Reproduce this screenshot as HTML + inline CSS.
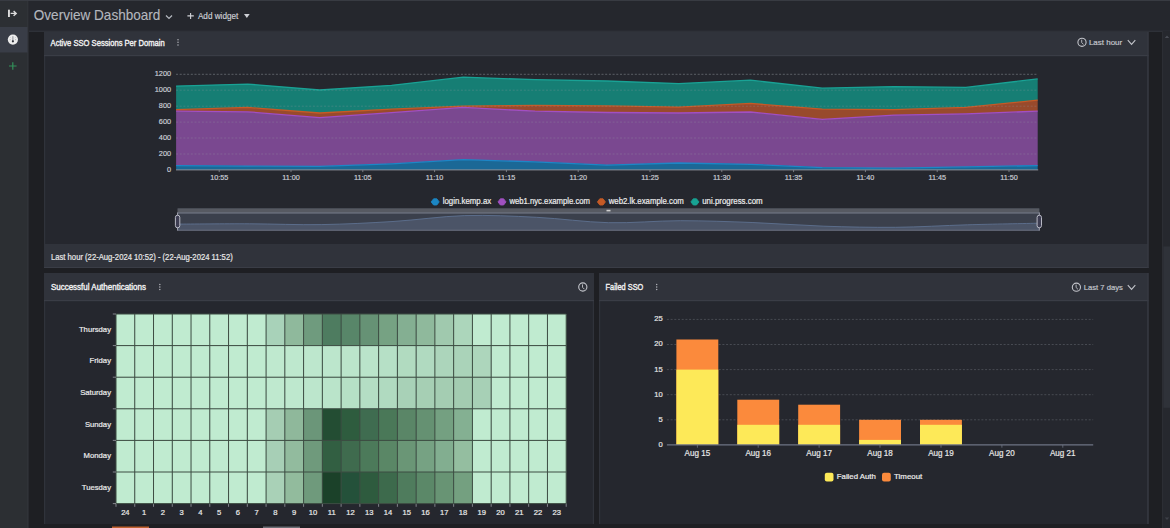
<!DOCTYPE html><html><head><meta charset="utf-8"><style>html,body{margin:0;padding:0;width:1170px;height:528px;overflow:hidden;background:#1e1f23;}svg{display:block}</style></head><body><svg width="1170" height="528" viewBox="0 0 1170 528" font-family="'Liberation Sans', sans-serif"><rect x="0" y="0" width="1170" height="528" fill="#1e1f23"/><rect x="0" y="0" width="28" height="528" fill="#2c2f33"/><rect x="27.5" y="0" width="1" height="528" fill="#35383f"/><rect x="0" y="27" width="27.5" height="25.5" fill="#393d47"/><rect x="29" y="0" width="1141" height="31" fill="#25272d"/><rect x="0" y="0" width="1170" height="1" fill="#383b42"/><rect x="29" y="30.6" width="1141" height="1.4" fill="#2e3138"/><rect x="44" y="32" width="1104.5" height="236" fill="#30333b"/><rect x="45.2" y="56" width="1102.1" height="188" fill="#25272e"/><rect x="44" y="55" width="1104.5" height="1.2" fill="#3a3d46"/><rect x="44" y="267" width="1104.5" height="1" fill="#3a3d46"/><rect x="1147.4" y="32" width="1.2" height="236" fill="#383b43"/><rect x="44" y="273" width="550" height="251" fill="#30333b"/><rect x="45.2" y="301" width="547.6" height="223" fill="#25272e"/><rect x="44" y="300" width="550" height="1.2" fill="#3a3d46"/><rect x="599" y="273" width="549.5" height="251" fill="#30333b"/><rect x="600.2" y="301" width="547.1" height="223" fill="#25272e"/><rect x="599" y="300" width="549.5" height="1.2" fill="#3a3d46"/><rect x="1147.4" y="273" width="1.2" height="251" fill="#383b43"/><rect x="1162" y="31" width="8" height="497" fill="#26282e"/><rect x="1162" y="31" width="1" height="497" fill="#2c2e34"/><rect x="1163.4" y="246.5" width="6.6" height="161.3" fill="#2f3239"/><path d="M1164.8,517.5 L1167,519.9 L1169.2,517.5 Z" fill="#3e4148"/><path d="M1164.8,38 L1167,35.6 L1169.2,38 Z" fill="#4a4d55"/><rect x="112" y="526.5" width="37" height="1.5" fill="#c0612f"/><rect x="263" y="526.5" width="37" height="1.5" fill="#6a6d74"/><polygon points="176.1,86.1 247.9,84.1 319.7,90.0 391.5,85.3 463.3,77.2 535.1,79.7 606.9,81.0 678.7,83.6 750.5,80.2 822.3,88.2 894.1,86.6 965.9,87.4 1037.7,78.9 1037.7,100.2 965.9,107.4 894.1,109.7 822.3,109.2 750.5,103.4 678.7,107.1 606.9,105.9 535.1,105.3 463.3,106.2 391.5,109.2 319.7,113.0 247.9,107.4 176.1,109.7" fill="#167e74"/><polygon points="176.1,109.7 247.9,107.4 319.7,113.0 391.5,109.2 463.3,106.2 535.1,105.3 606.9,105.9 678.7,107.1 750.5,103.4 822.3,109.2 894.1,109.7 965.9,107.4 1037.7,100.2 1037.7,111.2 965.9,113.8 894.1,115.1 822.3,119.4 750.5,112.0 678.7,113.0 606.9,112.5 535.1,111.2 463.3,107.4 391.5,112.6 319.7,117.6 247.9,111.8 176.1,111.2" fill="#984a2c"/><polygon points="176.1,111.2 247.9,111.8 319.7,117.6 391.5,112.6 463.3,107.4 535.1,111.2 606.9,112.5 678.7,113.0 750.5,112.0 822.3,119.4 894.1,115.1 965.9,113.8 1037.7,111.2 1037.7,165.6 965.9,166.9 894.1,168.2 822.3,167.6 750.5,164.3 678.7,163.0 606.9,165.1 535.1,161.8 463.3,159.7 391.5,163.8 319.7,166.4 247.9,166.1 176.1,165.6" fill="#7a4890"/><polygon points="176.1,165.6 247.9,166.1 319.7,166.4 391.5,163.8 463.3,159.7 535.1,161.8 606.9,165.1 678.7,163.0 750.5,164.3 822.3,167.6 894.1,168.2 965.9,166.9 1037.7,165.6 1037.7,169.9 965.9,169.9 894.1,169.9 822.3,169.9 750.5,169.9 678.7,169.9 606.9,169.9 535.1,169.9 463.3,169.9 391.5,169.9 319.7,169.9 247.9,169.9 176.1,169.9" fill="#1b6896"/><polyline points="176.1,86.1 247.9,84.1 319.7,90.0 391.5,85.3 463.3,77.2 535.1,79.7 606.9,81.0 678.7,83.6 750.5,80.2 822.3,88.2 894.1,86.6 965.9,87.4 1037.7,78.9" fill="none" stroke="#19a295" stroke-width="1.3"/><polyline points="176.1,109.7 247.9,107.4 319.7,113.0 391.5,109.2 463.3,106.2 535.1,105.3 606.9,105.9 678.7,107.1 750.5,103.4 822.3,109.2 894.1,109.7 965.9,107.4 1037.7,100.2" fill="none" stroke="#c65a26" stroke-width="1.3"/><polyline points="176.1,111.2 247.9,111.8 319.7,117.6 391.5,112.6 463.3,107.4 535.1,111.2 606.9,112.5 678.7,113.0 750.5,112.0 822.3,119.4 894.1,115.1 965.9,113.8 1037.7,111.2" fill="none" stroke="#a24fc2" stroke-width="1.3"/><polyline points="176.1,165.6 247.9,166.1 319.7,166.4 391.5,163.8 463.3,159.7 535.1,161.8 606.9,165.1 678.7,163.0 750.5,164.3 822.3,167.6 894.1,168.2 965.9,166.9 1037.7,165.6" fill="none" stroke="#1d86c6" stroke-width="1.3"/><text x="171.10" y="171.80" font-size="7.5" fill="#c9cbd3" font-weight="400" text-anchor="end" textLength="4.09" lengthAdjust="spacingAndGlyphs" stroke="#c9cbd3" stroke-width="0.2" >0</text><line x1="176" y1="154.0" x2="1038" y2="154.0" stroke="#9a9da6" stroke-opacity="0.28" stroke-width="1" stroke-dasharray="2,1.7"/><text x="171.10" y="155.87" font-size="7.5" fill="#c9cbd3" font-weight="400" text-anchor="end" textLength="12.26" lengthAdjust="spacingAndGlyphs" stroke="#c9cbd3" stroke-width="0.2" >200</text><line x1="176" y1="138.0" x2="1038" y2="138.0" stroke="#9a9da6" stroke-opacity="0.28" stroke-width="1" stroke-dasharray="2,1.7"/><text x="171.10" y="139.93" font-size="7.5" fill="#c9cbd3" font-weight="400" text-anchor="end" textLength="12.26" lengthAdjust="spacingAndGlyphs" stroke="#c9cbd3" stroke-width="0.2" >400</text><line x1="176" y1="122.1" x2="1038" y2="122.1" stroke="#9a9da6" stroke-opacity="0.28" stroke-width="1" stroke-dasharray="2,1.7"/><text x="171.10" y="124.00" font-size="7.5" fill="#c9cbd3" font-weight="400" text-anchor="end" textLength="12.26" lengthAdjust="spacingAndGlyphs" stroke="#c9cbd3" stroke-width="0.2" >600</text><line x1="176" y1="106.2" x2="1038" y2="106.2" stroke="#9a9da6" stroke-opacity="0.28" stroke-width="1" stroke-dasharray="2,1.7"/><text x="171.10" y="108.07" font-size="7.5" fill="#c9cbd3" font-weight="400" text-anchor="end" textLength="12.26" lengthAdjust="spacingAndGlyphs" stroke="#c9cbd3" stroke-width="0.2" >800</text><line x1="176" y1="90.2" x2="1038" y2="90.2" stroke="#9a9da6" stroke-opacity="0.28" stroke-width="1" stroke-dasharray="2,1.7"/><text x="171.10" y="92.13" font-size="7.5" fill="#c9cbd3" font-weight="400" text-anchor="end" textLength="16.35" lengthAdjust="spacingAndGlyphs" stroke="#c9cbd3" stroke-width="0.2" >1000</text><line x1="176" y1="74.3" x2="1038" y2="74.3" stroke="#9a9da6" stroke-opacity="0.28" stroke-width="1" stroke-dasharray="2,1.7"/><text x="171.10" y="76.20" font-size="7.5" fill="#c9cbd3" font-weight="400" text-anchor="end" textLength="16.35" lengthAdjust="spacingAndGlyphs" stroke="#c9cbd3" stroke-width="0.2" >1200</text><line x1="176" y1="74.3" x2="1038" y2="74.3" stroke="#6a6d76" stroke-opacity="0.5" stroke-width="1" stroke-dasharray="2,1.7"/><line x1="176" y1="169.9" x2="1038.2" y2="169.9" stroke="#8c8e96" stroke-width="1"/><line x1="219.2" y1="169.9" x2="219.2" y2="172.1" stroke="#8c8e96" stroke-width="0.8"/><text x="219.20" y="180.20" font-size="7.8" fill="#c9cbd3" font-weight="400" text-anchor="middle" textLength="18.15" lengthAdjust="spacingAndGlyphs" stroke="#c9cbd3" stroke-width="0.2" >10:55</text><line x1="291.0" y1="169.9" x2="291.0" y2="172.1" stroke="#8c8e96" stroke-width="0.8"/><text x="291.00" y="180.20" font-size="7.8" fill="#c9cbd3" font-weight="400" text-anchor="middle" textLength="17.61" lengthAdjust="spacingAndGlyphs" stroke="#c9cbd3" stroke-width="0.2" >11:00</text><line x1="362.8" y1="169.9" x2="362.8" y2="172.1" stroke="#8c8e96" stroke-width="0.8"/><text x="362.80" y="180.20" font-size="7.8" fill="#c9cbd3" font-weight="400" text-anchor="middle" textLength="17.61" lengthAdjust="spacingAndGlyphs" stroke="#c9cbd3" stroke-width="0.2" >11:05</text><line x1="434.6" y1="169.9" x2="434.6" y2="172.1" stroke="#8c8e96" stroke-width="0.8"/><text x="434.60" y="180.20" font-size="7.8" fill="#c9cbd3" font-weight="400" text-anchor="middle" textLength="17.61" lengthAdjust="spacingAndGlyphs" stroke="#c9cbd3" stroke-width="0.2" >11:10</text><line x1="506.4" y1="169.9" x2="506.4" y2="172.1" stroke="#8c8e96" stroke-width="0.8"/><text x="506.40" y="180.20" font-size="7.8" fill="#c9cbd3" font-weight="400" text-anchor="middle" textLength="17.61" lengthAdjust="spacingAndGlyphs" stroke="#c9cbd3" stroke-width="0.2" >11:15</text><line x1="578.2" y1="169.9" x2="578.2" y2="172.1" stroke="#8c8e96" stroke-width="0.8"/><text x="578.20" y="180.20" font-size="7.8" fill="#c9cbd3" font-weight="400" text-anchor="middle" textLength="17.61" lengthAdjust="spacingAndGlyphs" stroke="#c9cbd3" stroke-width="0.2" >11:20</text><line x1="650.0" y1="169.9" x2="650.0" y2="172.1" stroke="#8c8e96" stroke-width="0.8"/><text x="650.00" y="180.20" font-size="7.8" fill="#c9cbd3" font-weight="400" text-anchor="middle" textLength="17.61" lengthAdjust="spacingAndGlyphs" stroke="#c9cbd3" stroke-width="0.2" >11:25</text><line x1="721.8" y1="169.9" x2="721.8" y2="172.1" stroke="#8c8e96" stroke-width="0.8"/><text x="721.80" y="180.20" font-size="7.8" fill="#c9cbd3" font-weight="400" text-anchor="middle" textLength="17.61" lengthAdjust="spacingAndGlyphs" stroke="#c9cbd3" stroke-width="0.2" >11:30</text><line x1="793.6" y1="169.9" x2="793.6" y2="172.1" stroke="#8c8e96" stroke-width="0.8"/><text x="793.60" y="180.20" font-size="7.8" fill="#c9cbd3" font-weight="400" text-anchor="middle" textLength="17.61" lengthAdjust="spacingAndGlyphs" stroke="#c9cbd3" stroke-width="0.2" >11:35</text><line x1="865.4" y1="169.9" x2="865.4" y2="172.1" stroke="#8c8e96" stroke-width="0.8"/><text x="865.40" y="180.20" font-size="7.8" fill="#c9cbd3" font-weight="400" text-anchor="middle" textLength="17.61" lengthAdjust="spacingAndGlyphs" stroke="#c9cbd3" stroke-width="0.2" >11:40</text><line x1="937.2" y1="169.9" x2="937.2" y2="172.1" stroke="#8c8e96" stroke-width="0.8"/><text x="937.20" y="180.20" font-size="7.8" fill="#c9cbd3" font-weight="400" text-anchor="middle" textLength="17.61" lengthAdjust="spacingAndGlyphs" stroke="#c9cbd3" stroke-width="0.2" >11:45</text><line x1="1009.0" y1="169.9" x2="1009.0" y2="172.1" stroke="#8c8e96" stroke-width="0.8"/><text x="1009.00" y="180.20" font-size="7.8" fill="#c9cbd3" font-weight="400" text-anchor="middle" textLength="17.61" lengthAdjust="spacingAndGlyphs" stroke="#c9cbd3" stroke-width="0.2" >11:50</text><path d="M431.2,201.9 L433.59999999999997,198.8 L436.8,198.8 L439.2,201.9 L436.8,205.0 L433.59999999999997,205.0 Z" fill="#1b86c4" stroke="#1b86c4" stroke-width="0.9" stroke-linejoin="round"/><text x="442.70" y="203.70" font-size="8.3" fill="#ececec" font-weight="400" text-anchor="start" textLength="48.50" lengthAdjust="spacingAndGlyphs" stroke="#ececec" stroke-width="0.2" >login.kemp.ax</text><path d="M498.0,201.9 L500.4,198.8 L503.6,198.8 L506.0,201.9 L503.6,205.0 L500.4,205.0 Z" fill="#a050c0" stroke="#a050c0" stroke-width="0.9" stroke-linejoin="round"/><text x="509.40" y="203.70" font-size="8.3" fill="#ececec" font-weight="400" text-anchor="start" textLength="80.60" lengthAdjust="spacingAndGlyphs" stroke="#ececec" stroke-width="0.2" >web1.nyc.example.com</text><path d="M597.4,201.9 L599.8,198.8 L603.0,198.8 L605.4,201.9 L603.0,205.0 L599.8,205.0 Z" fill="#c45a26" stroke="#c45a26" stroke-width="0.9" stroke-linejoin="round"/><text x="608.70" y="203.70" font-size="8.3" fill="#ececec" font-weight="400" text-anchor="start" textLength="75.10" lengthAdjust="spacingAndGlyphs" stroke="#ececec" stroke-width="0.2" >web2.lk.example.com</text><path d="M690.9,201.9 L693.3,198.8 L696.5,198.8 L698.9,201.9 L696.5,205.0 L693.3,205.0 Z" fill="#17a393" stroke="#17a393" stroke-width="0.9" stroke-linejoin="round"/><text x="702.20" y="203.70" font-size="8.3" fill="#ececec" font-weight="400" text-anchor="start" textLength="60.40" lengthAdjust="spacingAndGlyphs" stroke="#ececec" stroke-width="0.2" >uni.progress.com</text><rect x="177.6" y="208.4" width="861.7" height="22.2" fill="#3b404c"/><rect x="177.6" y="208.4" width="861.7" height="4.1" fill="#575a62"/><rect x="177.6" y="212.4" width="861.7" height="1.1" fill="#7a7e8c"/><path d="M177.6,224.1 C189.6,224.1 225.5,223.7 249.4,223.8 C273.3,223.9 297.3,225.0 321.2,224.6 C345.2,224.2 369.1,223.0 393.0,221.5 C417.0,220.0 440.9,216.3 464.8,215.6 C488.8,214.9 512.7,216.1 536.6,217.3 C560.6,218.5 584.5,222.1 608.4,222.7 C632.4,223.3 656.3,220.7 680.3,220.7 C704.2,220.7 728.1,221.6 752.1,222.5 C776.0,223.4 799.9,225.4 823.9,226.2 C847.8,227.0 871.7,227.5 895.7,227.3 C919.6,227.1 943.6,225.5 967.5,224.8 C991.4,224.1 1027.3,223.5 1039.3,223.2 L1039.3,230.6 L177.6,230.6 Z" fill="#4b5467"/><path d="M177.6,224.1 C189.6,224.1 225.5,223.7 249.4,223.8 C273.3,223.9 297.3,225.0 321.2,224.6 C345.2,224.2 369.1,223.0 393.0,221.5 C417.0,220.0 440.9,216.3 464.8,215.6 C488.8,214.9 512.7,216.1 536.6,217.3 C560.6,218.5 584.5,222.1 608.4,222.7 C632.4,223.3 656.3,220.7 680.3,220.7 C704.2,220.7 728.1,221.6 752.1,222.5 C776.0,223.4 799.9,225.4 823.9,226.2 C847.8,227.0 871.7,227.5 895.7,227.3 C919.6,227.1 943.6,225.5 967.5,224.8 C991.4,224.1 1027.3,223.5 1039.3,223.2" fill="none" stroke="#5e7190" stroke-width="0.9"/><rect x="177.6" y="229.7" width="861.7" height="1" fill="#686d7c"/><line x1="177.6" y1="212.5" x2="177.6" y2="230.6" stroke="#b8b9c6" stroke-width="0.8"/><rect x="175.4" y="215.2" width="4.4" height="12.6" rx="2.2" fill="#3d3d52" stroke="#c6c7d2" stroke-width="0.9"/><line x1="1039.3" y1="212.5" x2="1039.3" y2="230.6" stroke="#b8b9c6" stroke-width="0.8"/><rect x="1037.1" y="215.2" width="4.4" height="12.6" rx="2.2" fill="#3d3d52" stroke="#c6c7d2" stroke-width="0.9"/><rect x="606.5" y="209.8" width="4" height="1.6" fill="#d0d0d0"/><rect x="116.00" y="314.00" width="18.81" height="31.65" fill="#c0ebd0"/><rect x="134.76" y="314.00" width="18.81" height="31.65" fill="#c0ebd0"/><rect x="153.52" y="314.00" width="18.81" height="31.65" fill="#c0ebd0"/><rect x="172.28" y="314.00" width="18.81" height="31.65" fill="#c0ebd0"/><rect x="191.03" y="314.00" width="18.81" height="31.65" fill="#c0ebd0"/><rect x="209.79" y="314.00" width="18.81" height="31.65" fill="#c0ebd0"/><rect x="228.55" y="314.00" width="18.81" height="31.65" fill="#c0ebd0"/><rect x="247.31" y="314.00" width="18.81" height="31.65" fill="#c0ebd0"/><rect x="266.07" y="314.00" width="18.81" height="31.65" fill="#a8d2b9"/><rect x="284.83" y="314.00" width="18.81" height="31.65" fill="#8fb99c"/><rect x="303.58" y="314.00" width="18.81" height="31.65" fill="#6f9b7e"/><rect x="322.34" y="314.00" width="18.81" height="31.65" fill="#4e7c60"/><rect x="341.10" y="314.00" width="18.81" height="31.65" fill="#588669"/><rect x="359.86" y="314.00" width="18.81" height="31.65" fill="#669275"/><rect x="378.62" y="314.00" width="18.81" height="31.65" fill="#76a283"/><rect x="397.38" y="314.00" width="18.81" height="31.65" fill="#84af92"/><rect x="416.13" y="314.00" width="18.81" height="31.65" fill="#8fb99c"/><rect x="434.89" y="314.00" width="18.81" height="31.65" fill="#a0c9ae"/><rect x="453.65" y="314.00" width="18.81" height="31.65" fill="#acd6bb"/><rect x="472.41" y="314.00" width="18.81" height="31.65" fill="#c0ebd0"/><rect x="491.17" y="314.00" width="18.81" height="31.65" fill="#c0ebd0"/><rect x="509.93" y="314.00" width="18.81" height="31.65" fill="#c0ebd0"/><rect x="528.68" y="314.00" width="18.81" height="31.65" fill="#c0ebd0"/><rect x="547.44" y="314.00" width="18.81" height="31.65" fill="#c0ebd0"/><rect x="116.00" y="345.60" width="18.81" height="31.65" fill="#c0ebd0"/><rect x="134.76" y="345.60" width="18.81" height="31.65" fill="#c0ebd0"/><rect x="153.52" y="345.60" width="18.81" height="31.65" fill="#c0ebd0"/><rect x="172.28" y="345.60" width="18.81" height="31.65" fill="#c0ebd0"/><rect x="191.03" y="345.60" width="18.81" height="31.65" fill="#c0ebd0"/><rect x="209.79" y="345.60" width="18.81" height="31.65" fill="#c0ebd0"/><rect x="228.55" y="345.60" width="18.81" height="31.65" fill="#c0ebd0"/><rect x="247.31" y="345.60" width="18.81" height="31.65" fill="#c0ebd0"/><rect x="266.07" y="345.60" width="18.81" height="31.65" fill="#bfe9cf"/><rect x="284.83" y="345.60" width="18.81" height="31.65" fill="#bee8ce"/><rect x="303.58" y="345.60" width="18.81" height="31.65" fill="#bde7cd"/><rect x="322.34" y="345.60" width="18.81" height="31.65" fill="#bce6cc"/><rect x="341.10" y="345.60" width="18.81" height="31.65" fill="#bbe5cb"/><rect x="359.86" y="345.60" width="18.81" height="31.65" fill="#bae4ca"/><rect x="378.62" y="345.60" width="18.81" height="31.65" fill="#b6e0c6"/><rect x="397.38" y="345.60" width="18.81" height="31.65" fill="#b1dbc0"/><rect x="416.13" y="345.60" width="18.81" height="31.65" fill="#b0dac0"/><rect x="434.89" y="345.60" width="18.81" height="31.65" fill="#acd5bb"/><rect x="453.65" y="345.60" width="18.81" height="31.65" fill="#aad3b9"/><rect x="472.41" y="345.60" width="18.81" height="31.65" fill="#add6bc"/><rect x="491.17" y="345.60" width="18.81" height="31.65" fill="#c0ebd0"/><rect x="509.93" y="345.60" width="18.81" height="31.65" fill="#c0ebd0"/><rect x="528.68" y="345.60" width="18.81" height="31.65" fill="#c0ebd0"/><rect x="547.44" y="345.60" width="18.81" height="31.65" fill="#c0ebd0"/><rect x="116.00" y="377.20" width="18.81" height="31.65" fill="#c0ebd0"/><rect x="134.76" y="377.20" width="18.81" height="31.65" fill="#c0ebd0"/><rect x="153.52" y="377.20" width="18.81" height="31.65" fill="#c0ebd0"/><rect x="172.28" y="377.20" width="18.81" height="31.65" fill="#c0ebd0"/><rect x="191.03" y="377.20" width="18.81" height="31.65" fill="#c0ebd0"/><rect x="209.79" y="377.20" width="18.81" height="31.65" fill="#c0ebd0"/><rect x="228.55" y="377.20" width="18.81" height="31.65" fill="#c0ebd0"/><rect x="247.31" y="377.20" width="18.81" height="31.65" fill="#c0ebd0"/><rect x="266.07" y="377.20" width="18.81" height="31.65" fill="#bfe9cf"/><rect x="284.83" y="377.20" width="18.81" height="31.65" fill="#bee8ce"/><rect x="303.58" y="377.20" width="18.81" height="31.65" fill="#bce6cc"/><rect x="322.34" y="377.20" width="18.81" height="31.65" fill="#bae4ca"/><rect x="341.10" y="377.20" width="18.81" height="31.65" fill="#b6e0c6"/><rect x="359.86" y="377.20" width="18.81" height="31.65" fill="#b4dec4"/><rect x="378.62" y="377.20" width="18.81" height="31.65" fill="#b0dac0"/><rect x="397.38" y="377.20" width="18.81" height="31.65" fill="#a8d1b7"/><rect x="416.13" y="377.20" width="18.81" height="31.65" fill="#a6cfb4"/><rect x="434.89" y="377.20" width="18.81" height="31.65" fill="#a4cdb2"/><rect x="453.65" y="377.20" width="18.81" height="31.65" fill="#a3ccb1"/><rect x="472.41" y="377.20" width="18.81" height="31.65" fill="#a7d0b6"/><rect x="491.17" y="377.20" width="18.81" height="31.65" fill="#c0ebd0"/><rect x="509.93" y="377.20" width="18.81" height="31.65" fill="#c0ebd0"/><rect x="528.68" y="377.20" width="18.81" height="31.65" fill="#c0ebd0"/><rect x="547.44" y="377.20" width="18.81" height="31.65" fill="#c0ebd0"/><rect x="116.00" y="408.80" width="18.81" height="31.65" fill="#c0ebd0"/><rect x="134.76" y="408.80" width="18.81" height="31.65" fill="#c0ebd0"/><rect x="153.52" y="408.80" width="18.81" height="31.65" fill="#c0ebd0"/><rect x="172.28" y="408.80" width="18.81" height="31.65" fill="#c0ebd0"/><rect x="191.03" y="408.80" width="18.81" height="31.65" fill="#c0ebd0"/><rect x="209.79" y="408.80" width="18.81" height="31.65" fill="#c0ebd0"/><rect x="228.55" y="408.80" width="18.81" height="31.65" fill="#c0ebd0"/><rect x="247.31" y="408.80" width="18.81" height="31.65" fill="#c0ebd0"/><rect x="266.07" y="408.80" width="18.81" height="31.65" fill="#a5cdb3"/><rect x="284.83" y="408.80" width="18.81" height="31.65" fill="#8fb89b"/><rect x="303.58" y="408.80" width="18.81" height="31.65" fill="#6b9679"/><rect x="322.34" y="408.80" width="18.81" height="31.65" fill="#234d33"/><rect x="341.10" y="408.80" width="18.81" height="31.65" fill="#2e5c3e"/><rect x="359.86" y="408.80" width="18.81" height="31.65" fill="#3f6c50"/><rect x="378.62" y="408.80" width="18.81" height="31.65" fill="#4a7858"/><rect x="397.38" y="408.80" width="18.81" height="31.65" fill="#5a8667"/><rect x="416.13" y="408.80" width="18.81" height="31.65" fill="#659172"/><rect x="434.89" y="408.80" width="18.81" height="31.65" fill="#74a081"/><rect x="453.65" y="408.80" width="18.81" height="31.65" fill="#84b092"/><rect x="472.41" y="408.80" width="18.81" height="31.65" fill="#c0ebd0"/><rect x="491.17" y="408.80" width="18.81" height="31.65" fill="#c0ebd0"/><rect x="509.93" y="408.80" width="18.81" height="31.65" fill="#c0ebd0"/><rect x="528.68" y="408.80" width="18.81" height="31.65" fill="#c0ebd0"/><rect x="547.44" y="408.80" width="18.81" height="31.65" fill="#c0ebd0"/><rect x="116.00" y="440.40" width="18.81" height="31.65" fill="#c0ebd0"/><rect x="134.76" y="440.40" width="18.81" height="31.65" fill="#c0ebd0"/><rect x="153.52" y="440.40" width="18.81" height="31.65" fill="#c0ebd0"/><rect x="172.28" y="440.40" width="18.81" height="31.65" fill="#c0ebd0"/><rect x="191.03" y="440.40" width="18.81" height="31.65" fill="#c0ebd0"/><rect x="209.79" y="440.40" width="18.81" height="31.65" fill="#c0ebd0"/><rect x="228.55" y="440.40" width="18.81" height="31.65" fill="#c0ebd0"/><rect x="247.31" y="440.40" width="18.81" height="31.65" fill="#c0ebd0"/><rect x="266.07" y="440.40" width="18.81" height="31.65" fill="#a7cfb6"/><rect x="284.83" y="440.40" width="18.81" height="31.65" fill="#92bb9e"/><rect x="303.58" y="440.40" width="18.81" height="31.65" fill="#6f9a7c"/><rect x="322.34" y="440.40" width="18.81" height="31.65" fill="#325f42"/><rect x="341.10" y="440.40" width="18.81" height="31.65" fill="#3f6b4e"/><rect x="359.86" y="440.40" width="18.81" height="31.65" fill="#4c7a5a"/><rect x="378.62" y="440.40" width="18.81" height="31.65" fill="#5a8766"/><rect x="397.38" y="440.40" width="18.81" height="31.65" fill="#6a9676"/><rect x="416.13" y="440.40" width="18.81" height="31.65" fill="#76a283"/><rect x="434.89" y="440.40" width="18.81" height="31.65" fill="#82ae90"/><rect x="453.65" y="440.40" width="18.81" height="31.65" fill="#94bea0"/><rect x="472.41" y="440.40" width="18.81" height="31.65" fill="#c0ebd0"/><rect x="491.17" y="440.40" width="18.81" height="31.65" fill="#c0ebd0"/><rect x="509.93" y="440.40" width="18.81" height="31.65" fill="#c0ebd0"/><rect x="528.68" y="440.40" width="18.81" height="31.65" fill="#c0ebd0"/><rect x="547.44" y="440.40" width="18.81" height="31.65" fill="#c0ebd0"/><rect x="116.00" y="472.00" width="18.81" height="31.65" fill="#c0ebd0"/><rect x="134.76" y="472.00" width="18.81" height="31.65" fill="#c0ebd0"/><rect x="153.52" y="472.00" width="18.81" height="31.65" fill="#c0ebd0"/><rect x="172.28" y="472.00" width="18.81" height="31.65" fill="#c0ebd0"/><rect x="191.03" y="472.00" width="18.81" height="31.65" fill="#c0ebd0"/><rect x="209.79" y="472.00" width="18.81" height="31.65" fill="#c0ebd0"/><rect x="228.55" y="472.00" width="18.81" height="31.65" fill="#c0ebd0"/><rect x="247.31" y="472.00" width="18.81" height="31.65" fill="#c0ebd0"/><rect x="266.07" y="472.00" width="18.81" height="31.65" fill="#a9d1b7"/><rect x="284.83" y="472.00" width="18.81" height="31.65" fill="#92bb9d"/><rect x="303.58" y="472.00" width="18.81" height="31.65" fill="#6f9a7c"/><rect x="322.34" y="472.00" width="18.81" height="31.65" fill="#1b4129"/><rect x="341.10" y="472.00" width="18.81" height="31.65" fill="#24513a"/><rect x="359.86" y="472.00" width="18.81" height="31.65" fill="#2e5b3e"/><rect x="378.62" y="472.00" width="18.81" height="31.65" fill="#3d6a4c"/><rect x="397.38" y="472.00" width="18.81" height="31.65" fill="#4f7c5d"/><rect x="416.13" y="472.00" width="18.81" height="31.65" fill="#5b8868"/><rect x="434.89" y="472.00" width="18.81" height="31.65" fill="#689474"/><rect x="453.65" y="472.00" width="18.81" height="31.65" fill="#74a080"/><rect x="472.41" y="472.00" width="18.81" height="31.65" fill="#c0ebd0"/><rect x="491.17" y="472.00" width="18.81" height="31.65" fill="#c0ebd0"/><rect x="509.93" y="472.00" width="18.81" height="31.65" fill="#c0ebd0"/><rect x="528.68" y="472.00" width="18.81" height="31.65" fill="#c0ebd0"/><rect x="547.44" y="472.00" width="18.81" height="31.65" fill="#c0ebd0"/><line x1="116.00" y1="314.0" x2="116.00" y2="503.60" stroke="#3d4d43" stroke-width="1"/><line x1="116.00" y1="503.60" x2="116.00" y2="506.80" stroke="#9a9ca3" stroke-width="0.8"/><line x1="134.76" y1="314.0" x2="134.76" y2="503.60" stroke="#3d4d43" stroke-width="1"/><line x1="134.76" y1="503.60" x2="134.76" y2="506.80" stroke="#9a9ca3" stroke-width="0.8"/><line x1="153.52" y1="314.0" x2="153.52" y2="503.60" stroke="#3d4d43" stroke-width="1"/><line x1="153.52" y1="503.60" x2="153.52" y2="506.80" stroke="#9a9ca3" stroke-width="0.8"/><line x1="172.28" y1="314.0" x2="172.28" y2="503.60" stroke="#3d4d43" stroke-width="1"/><line x1="172.28" y1="503.60" x2="172.28" y2="506.80" stroke="#9a9ca3" stroke-width="0.8"/><line x1="191.03" y1="314.0" x2="191.03" y2="503.60" stroke="#3d4d43" stroke-width="1"/><line x1="191.03" y1="503.60" x2="191.03" y2="506.80" stroke="#9a9ca3" stroke-width="0.8"/><line x1="209.79" y1="314.0" x2="209.79" y2="503.60" stroke="#3d4d43" stroke-width="1"/><line x1="209.79" y1="503.60" x2="209.79" y2="506.80" stroke="#9a9ca3" stroke-width="0.8"/><line x1="228.55" y1="314.0" x2="228.55" y2="503.60" stroke="#3d4d43" stroke-width="1"/><line x1="228.55" y1="503.60" x2="228.55" y2="506.80" stroke="#9a9ca3" stroke-width="0.8"/><line x1="247.31" y1="314.0" x2="247.31" y2="503.60" stroke="#3d4d43" stroke-width="1"/><line x1="247.31" y1="503.60" x2="247.31" y2="506.80" stroke="#9a9ca3" stroke-width="0.8"/><line x1="266.07" y1="314.0" x2="266.07" y2="503.60" stroke="#3d4d43" stroke-width="1"/><line x1="266.07" y1="503.60" x2="266.07" y2="506.80" stroke="#9a9ca3" stroke-width="0.8"/><line x1="284.83" y1="314.0" x2="284.83" y2="503.60" stroke="#3d4d43" stroke-width="1"/><line x1="284.83" y1="503.60" x2="284.83" y2="506.80" stroke="#9a9ca3" stroke-width="0.8"/><line x1="303.58" y1="314.0" x2="303.58" y2="503.60" stroke="#3d4d43" stroke-width="1"/><line x1="303.58" y1="503.60" x2="303.58" y2="506.80" stroke="#9a9ca3" stroke-width="0.8"/><line x1="322.34" y1="314.0" x2="322.34" y2="503.60" stroke="#3d4d43" stroke-width="1"/><line x1="322.34" y1="503.60" x2="322.34" y2="506.80" stroke="#9a9ca3" stroke-width="0.8"/><line x1="341.10" y1="314.0" x2="341.10" y2="503.60" stroke="#3d4d43" stroke-width="1"/><line x1="341.10" y1="503.60" x2="341.10" y2="506.80" stroke="#9a9ca3" stroke-width="0.8"/><line x1="359.86" y1="314.0" x2="359.86" y2="503.60" stroke="#3d4d43" stroke-width="1"/><line x1="359.86" y1="503.60" x2="359.86" y2="506.80" stroke="#9a9ca3" stroke-width="0.8"/><line x1="378.62" y1="314.0" x2="378.62" y2="503.60" stroke="#3d4d43" stroke-width="1"/><line x1="378.62" y1="503.60" x2="378.62" y2="506.80" stroke="#9a9ca3" stroke-width="0.8"/><line x1="397.38" y1="314.0" x2="397.38" y2="503.60" stroke="#3d4d43" stroke-width="1"/><line x1="397.38" y1="503.60" x2="397.38" y2="506.80" stroke="#9a9ca3" stroke-width="0.8"/><line x1="416.13" y1="314.0" x2="416.13" y2="503.60" stroke="#3d4d43" stroke-width="1"/><line x1="416.13" y1="503.60" x2="416.13" y2="506.80" stroke="#9a9ca3" stroke-width="0.8"/><line x1="434.89" y1="314.0" x2="434.89" y2="503.60" stroke="#3d4d43" stroke-width="1"/><line x1="434.89" y1="503.60" x2="434.89" y2="506.80" stroke="#9a9ca3" stroke-width="0.8"/><line x1="453.65" y1="314.0" x2="453.65" y2="503.60" stroke="#3d4d43" stroke-width="1"/><line x1="453.65" y1="503.60" x2="453.65" y2="506.80" stroke="#9a9ca3" stroke-width="0.8"/><line x1="472.41" y1="314.0" x2="472.41" y2="503.60" stroke="#3d4d43" stroke-width="1"/><line x1="472.41" y1="503.60" x2="472.41" y2="506.80" stroke="#9a9ca3" stroke-width="0.8"/><line x1="491.17" y1="314.0" x2="491.17" y2="503.60" stroke="#3d4d43" stroke-width="1"/><line x1="491.17" y1="503.60" x2="491.17" y2="506.80" stroke="#9a9ca3" stroke-width="0.8"/><line x1="509.93" y1="314.0" x2="509.93" y2="503.60" stroke="#3d4d43" stroke-width="1"/><line x1="509.93" y1="503.60" x2="509.93" y2="506.80" stroke="#9a9ca3" stroke-width="0.8"/><line x1="528.68" y1="314.0" x2="528.68" y2="503.60" stroke="#3d4d43" stroke-width="1"/><line x1="528.68" y1="503.60" x2="528.68" y2="506.80" stroke="#9a9ca3" stroke-width="0.8"/><line x1="547.44" y1="314.0" x2="547.44" y2="503.60" stroke="#3d4d43" stroke-width="1"/><line x1="547.44" y1="503.60" x2="547.44" y2="506.80" stroke="#9a9ca3" stroke-width="0.8"/><line x1="566.20" y1="314.0" x2="566.20" y2="503.60" stroke="#3d4d43" stroke-width="1"/><line x1="566.20" y1="503.60" x2="566.20" y2="506.80" stroke="#9a9ca3" stroke-width="0.8"/><line x1="116.0" y1="314.00" x2="566.20" y2="314.00" stroke="#3d4d43" stroke-width="1"/><line x1="112.8" y1="314.00" x2="116.0" y2="314.00" stroke="#9a9ca3" stroke-width="0.8"/><line x1="116.0" y1="345.60" x2="566.20" y2="345.60" stroke="#3d4d43" stroke-width="1"/><line x1="112.8" y1="345.60" x2="116.0" y2="345.60" stroke="#9a9ca3" stroke-width="0.8"/><line x1="116.0" y1="377.20" x2="566.20" y2="377.20" stroke="#3d4d43" stroke-width="1"/><line x1="112.8" y1="377.20" x2="116.0" y2="377.20" stroke="#9a9ca3" stroke-width="0.8"/><line x1="116.0" y1="408.80" x2="566.20" y2="408.80" stroke="#3d4d43" stroke-width="1"/><line x1="112.8" y1="408.80" x2="116.0" y2="408.80" stroke="#9a9ca3" stroke-width="0.8"/><line x1="116.0" y1="440.40" x2="566.20" y2="440.40" stroke="#3d4d43" stroke-width="1"/><line x1="112.8" y1="440.40" x2="116.0" y2="440.40" stroke="#9a9ca3" stroke-width="0.8"/><line x1="116.0" y1="472.00" x2="566.20" y2="472.00" stroke="#3d4d43" stroke-width="1"/><line x1="112.8" y1="472.00" x2="116.0" y2="472.00" stroke="#9a9ca3" stroke-width="0.8"/><line x1="116.0" y1="503.60" x2="566.20" y2="503.60" stroke="#3d4d43" stroke-width="1"/><line x1="112.8" y1="503.60" x2="116.0" y2="503.60" stroke="#9a9ca3" stroke-width="0.8"/><text x="111.00" y="331.80" font-size="8.1" fill="#ececec" font-weight="400" text-anchor="end" textLength="32.08" lengthAdjust="spacingAndGlyphs" stroke="#ececec" stroke-width="0.2" >Thursday</text><text x="111.00" y="363.40" font-size="8.1" fill="#ececec" font-weight="400" text-anchor="end" textLength="21.38" lengthAdjust="spacingAndGlyphs" stroke="#ececec" stroke-width="0.2" >Friday</text><text x="111.00" y="395.00" font-size="8.1" fill="#ececec" font-weight="400" text-anchor="end" textLength="30.80" lengthAdjust="spacingAndGlyphs" stroke="#ececec" stroke-width="0.2" >Saturday</text><text x="111.00" y="426.60" font-size="8.1" fill="#ececec" font-weight="400" text-anchor="end" textLength="26.10" lengthAdjust="spacingAndGlyphs" stroke="#ececec" stroke-width="0.2" >Sunday</text><text x="111.00" y="458.20" font-size="8.1" fill="#ececec" font-weight="400" text-anchor="end" textLength="27.38" lengthAdjust="spacingAndGlyphs" stroke="#ececec" stroke-width="0.2" >Monday</text><text x="111.00" y="489.80" font-size="8.1" fill="#ececec" font-weight="400" text-anchor="end" textLength="29.23" lengthAdjust="spacingAndGlyphs" stroke="#ececec" stroke-width="0.2" >Tuesday</text><text x="125.38" y="514.80" font-size="8.0" fill="#ececec" font-weight="400" text-anchor="middle" textLength="8.45" lengthAdjust="spacingAndGlyphs" stroke="#ececec" stroke-width="0.2" >24</text><text x="144.14" y="514.80" font-size="8.0" fill="#ececec" font-weight="400" text-anchor="middle" textLength="4.23" lengthAdjust="spacingAndGlyphs" stroke="#ececec" stroke-width="0.2" >1</text><text x="162.90" y="514.80" font-size="8.0" fill="#ececec" font-weight="400" text-anchor="middle" textLength="4.23" lengthAdjust="spacingAndGlyphs" stroke="#ececec" stroke-width="0.2" >2</text><text x="181.65" y="514.80" font-size="8.0" fill="#ececec" font-weight="400" text-anchor="middle" textLength="4.23" lengthAdjust="spacingAndGlyphs" stroke="#ececec" stroke-width="0.2" >3</text><text x="200.41" y="514.80" font-size="8.0" fill="#ececec" font-weight="400" text-anchor="middle" textLength="4.23" lengthAdjust="spacingAndGlyphs" stroke="#ececec" stroke-width="0.2" >4</text><text x="219.17" y="514.80" font-size="8.0" fill="#ececec" font-weight="400" text-anchor="middle" textLength="4.23" lengthAdjust="spacingAndGlyphs" stroke="#ececec" stroke-width="0.2" >5</text><text x="237.93" y="514.80" font-size="8.0" fill="#ececec" font-weight="400" text-anchor="middle" textLength="4.23" lengthAdjust="spacingAndGlyphs" stroke="#ececec" stroke-width="0.2" >6</text><text x="256.69" y="514.80" font-size="8.0" fill="#ececec" font-weight="400" text-anchor="middle" textLength="4.23" lengthAdjust="spacingAndGlyphs" stroke="#ececec" stroke-width="0.2" >7</text><text x="275.45" y="514.80" font-size="8.0" fill="#ececec" font-weight="400" text-anchor="middle" textLength="4.23" lengthAdjust="spacingAndGlyphs" stroke="#ececec" stroke-width="0.2" >8</text><text x="294.20" y="514.80" font-size="8.0" fill="#ececec" font-weight="400" text-anchor="middle" textLength="4.23" lengthAdjust="spacingAndGlyphs" stroke="#ececec" stroke-width="0.2" >9</text><text x="312.96" y="514.80" font-size="8.0" fill="#ececec" font-weight="400" text-anchor="middle" textLength="8.45" lengthAdjust="spacingAndGlyphs" stroke="#ececec" stroke-width="0.2" >10</text><text x="331.72" y="514.80" font-size="8.0" fill="#ececec" font-weight="400" text-anchor="middle" textLength="7.89" lengthAdjust="spacingAndGlyphs" stroke="#ececec" stroke-width="0.2" >11</text><text x="350.48" y="514.80" font-size="8.0" fill="#ececec" font-weight="400" text-anchor="middle" textLength="8.45" lengthAdjust="spacingAndGlyphs" stroke="#ececec" stroke-width="0.2" >12</text><text x="369.24" y="514.80" font-size="8.0" fill="#ececec" font-weight="400" text-anchor="middle" textLength="8.45" lengthAdjust="spacingAndGlyphs" stroke="#ececec" stroke-width="0.2" >13</text><text x="388.00" y="514.80" font-size="8.0" fill="#ececec" font-weight="400" text-anchor="middle" textLength="8.45" lengthAdjust="spacingAndGlyphs" stroke="#ececec" stroke-width="0.2" >14</text><text x="406.75" y="514.80" font-size="8.0" fill="#ececec" font-weight="400" text-anchor="middle" textLength="8.45" lengthAdjust="spacingAndGlyphs" stroke="#ececec" stroke-width="0.2" >15</text><text x="425.51" y="514.80" font-size="8.0" fill="#ececec" font-weight="400" text-anchor="middle" textLength="8.45" lengthAdjust="spacingAndGlyphs" stroke="#ececec" stroke-width="0.2" >16</text><text x="444.27" y="514.80" font-size="8.0" fill="#ececec" font-weight="400" text-anchor="middle" textLength="8.45" lengthAdjust="spacingAndGlyphs" stroke="#ececec" stroke-width="0.2" >17</text><text x="463.03" y="514.80" font-size="8.0" fill="#ececec" font-weight="400" text-anchor="middle" textLength="8.45" lengthAdjust="spacingAndGlyphs" stroke="#ececec" stroke-width="0.2" >18</text><text x="481.79" y="514.80" font-size="8.0" fill="#ececec" font-weight="400" text-anchor="middle" textLength="8.45" lengthAdjust="spacingAndGlyphs" stroke="#ececec" stroke-width="0.2" >19</text><text x="500.55" y="514.80" font-size="8.0" fill="#ececec" font-weight="400" text-anchor="middle" textLength="8.45" lengthAdjust="spacingAndGlyphs" stroke="#ececec" stroke-width="0.2" >20</text><text x="519.30" y="514.80" font-size="8.0" fill="#ececec" font-weight="400" text-anchor="middle" textLength="8.45" lengthAdjust="spacingAndGlyphs" stroke="#ececec" stroke-width="0.2" >21</text><text x="538.06" y="514.80" font-size="8.0" fill="#ececec" font-weight="400" text-anchor="middle" textLength="8.45" lengthAdjust="spacingAndGlyphs" stroke="#ececec" stroke-width="0.2" >22</text><text x="556.82" y="514.80" font-size="8.0" fill="#ececec" font-weight="400" text-anchor="middle" textLength="8.45" lengthAdjust="spacingAndGlyphs" stroke="#ececec" stroke-width="0.2" >23</text><text x="662.70" y="446.80" font-size="8.0" fill="#e6e6e6" font-weight="400" text-anchor="end" textLength="4.23" lengthAdjust="spacingAndGlyphs" stroke="#e6e6e6" stroke-width="0.2" >0</text><line x1="666.9" y1="419.8" x2="1093.2" y2="419.8" stroke="#6a6d76" stroke-opacity="0.5" stroke-width="1" stroke-dasharray="2,1.7"/><text x="662.70" y="421.70" font-size="8.0" fill="#e6e6e6" font-weight="400" text-anchor="end" textLength="4.23" lengthAdjust="spacingAndGlyphs" stroke="#e6e6e6" stroke-width="0.2" >5</text><line x1="666.9" y1="394.7" x2="1093.2" y2="394.7" stroke="#6a6d76" stroke-opacity="0.5" stroke-width="1" stroke-dasharray="2,1.7"/><text x="662.70" y="396.60" font-size="8.0" fill="#e6e6e6" font-weight="400" text-anchor="end" textLength="8.45" lengthAdjust="spacingAndGlyphs" stroke="#e6e6e6" stroke-width="0.2" >10</text><line x1="666.9" y1="369.6" x2="1093.2" y2="369.6" stroke="#6a6d76" stroke-opacity="0.5" stroke-width="1" stroke-dasharray="2,1.7"/><text x="662.70" y="371.50" font-size="8.0" fill="#e6e6e6" font-weight="400" text-anchor="end" textLength="8.45" lengthAdjust="spacingAndGlyphs" stroke="#e6e6e6" stroke-width="0.2" >15</text><line x1="666.9" y1="344.5" x2="1093.2" y2="344.5" stroke="#6a6d76" stroke-opacity="0.5" stroke-width="1" stroke-dasharray="2,1.7"/><text x="662.70" y="346.40" font-size="8.0" fill="#e6e6e6" font-weight="400" text-anchor="end" textLength="8.45" lengthAdjust="spacingAndGlyphs" stroke="#e6e6e6" stroke-width="0.2" >20</text><line x1="666.9" y1="319.4" x2="1093.2" y2="319.4" stroke="#6a6d76" stroke-opacity="0.5" stroke-width="1" stroke-dasharray="2,1.7"/><text x="662.70" y="321.30" font-size="8.0" fill="#e6e6e6" font-weight="400" text-anchor="end" textLength="8.45" lengthAdjust="spacingAndGlyphs" stroke="#e6e6e6" stroke-width="0.2" >25</text><rect x="676.4" y="339.5" width="41.9" height="105.4" fill="#fb8a3c"/><rect x="676.4" y="369.6" width="41.9" height="75.3" fill="#fde958"/><rect x="737.3" y="399.7" width="41.9" height="45.2" fill="#fb8a3c"/><rect x="737.3" y="424.8" width="41.9" height="20.1" fill="#fde958"/><rect x="798.2" y="404.7" width="41.9" height="40.2" fill="#fb8a3c"/><rect x="798.2" y="424.8" width="41.9" height="20.1" fill="#fde958"/><rect x="859.1" y="419.8" width="41.9" height="25.1" fill="#fb8a3c"/><rect x="859.1" y="439.9" width="41.9" height="5.0" fill="#fde958"/><rect x="920.0" y="419.8" width="41.9" height="25.1" fill="#fb8a3c"/><rect x="920.0" y="424.8" width="41.9" height="20.1" fill="#fde958"/><line x1="666.9" y1="444.9" x2="1093.2" y2="444.9" stroke="#6e7584" stroke-width="1.2"/><line x1="697.4" y1="444.9" x2="697.4" y2="447.7" stroke="#6e7584" stroke-width="0.8"/><text x="697.35" y="455.90" font-size="8.4" fill="#e6e6e6" font-weight="400" text-anchor="middle" textLength="25.56" lengthAdjust="spacingAndGlyphs" stroke="#e6e6e6" stroke-width="0.2" >Aug 15</text><line x1="758.2" y1="444.9" x2="758.2" y2="447.7" stroke="#6e7584" stroke-width="0.8"/><text x="758.25" y="455.90" font-size="8.4" fill="#e6e6e6" font-weight="400" text-anchor="middle" textLength="25.56" lengthAdjust="spacingAndGlyphs" stroke="#e6e6e6" stroke-width="0.2" >Aug 16</text><line x1="819.1" y1="444.9" x2="819.1" y2="447.7" stroke="#6e7584" stroke-width="0.8"/><text x="819.15" y="455.90" font-size="8.4" fill="#e6e6e6" font-weight="400" text-anchor="middle" textLength="25.56" lengthAdjust="spacingAndGlyphs" stroke="#e6e6e6" stroke-width="0.2" >Aug 17</text><line x1="880.0" y1="444.9" x2="880.0" y2="447.7" stroke="#6e7584" stroke-width="0.8"/><text x="880.05" y="455.90" font-size="8.4" fill="#e6e6e6" font-weight="400" text-anchor="middle" textLength="25.56" lengthAdjust="spacingAndGlyphs" stroke="#e6e6e6" stroke-width="0.2" >Aug 18</text><line x1="941.0" y1="444.9" x2="941.0" y2="447.7" stroke="#6e7584" stroke-width="0.8"/><text x="940.95" y="455.90" font-size="8.4" fill="#e6e6e6" font-weight="400" text-anchor="middle" textLength="25.56" lengthAdjust="spacingAndGlyphs" stroke="#e6e6e6" stroke-width="0.2" >Aug 19</text><line x1="1001.9" y1="444.9" x2="1001.9" y2="447.7" stroke="#6e7584" stroke-width="0.8"/><text x="1001.85" y="455.90" font-size="8.4" fill="#e6e6e6" font-weight="400" text-anchor="middle" textLength="25.56" lengthAdjust="spacingAndGlyphs" stroke="#e6e6e6" stroke-width="0.2" >Aug 20</text><line x1="1062.8" y1="444.9" x2="1062.8" y2="447.7" stroke="#6e7584" stroke-width="0.8"/><text x="1062.75" y="455.90" font-size="8.4" fill="#e6e6e6" font-weight="400" text-anchor="middle" textLength="25.56" lengthAdjust="spacingAndGlyphs" stroke="#e6e6e6" stroke-width="0.2" >Aug 21</text><rect x="824.8" y="472.7" width="8.7" height="8.7" rx="2" fill="#fde958"/><text x="836.80" y="479.10" font-size="7.8" fill="#ececec" font-weight="400" text-anchor="start" textLength="39.00" lengthAdjust="spacingAndGlyphs" stroke="#ececec" stroke-width="0.2" >Failed Auth</text><rect x="882" y="472.7" width="8.8" height="8.7" rx="2" fill="#fb8a3c"/><text x="894.10" y="479.10" font-size="7.8" fill="#ececec" font-weight="400" text-anchor="start" textLength="28.20" lengthAdjust="spacingAndGlyphs" stroke="#ececec" stroke-width="0.2" >Timeout</text><text x="33.80" y="20.46" font-size="14.5" fill="#b4b7be" font-weight="400" text-anchor="start" textLength="126.60" lengthAdjust="spacingAndGlyphs" stroke="#b4b7be" stroke-width="0.12" >Overview Dashboard</text><path d="M166,15.6 L169,18.4 L172,15.6" fill="none" stroke="#b4b7be" stroke-width="1.3"/><path d="M190.6,12.9 V18.9 M187.4,15.9 H193.8" stroke="#cfd1d6" stroke-width="1.1"/><text x="197.90" y="18.90" font-size="8.4" fill="#cfd1d6" font-weight="400" text-anchor="start" textLength="40.40" lengthAdjust="spacingAndGlyphs" stroke="#cfd1d6" stroke-width="0.15" >Add widget</text><path d="M244,14 L249.7,14 L246.85,18 Z" fill="#cfd1d6"/><text x="50.60" y="45.50" font-size="9.0" fill="#f2f2f2" font-weight="400" text-anchor="start" textLength="114.10" lengthAdjust="spacingAndGlyphs" stroke="#f2f2f2" stroke-width="0.38" >Active SSO Sessions Per Domain</text><circle cx="178" cy="39.70" r="0.75" fill="#b0b2b8"/><circle cx="178" cy="42.30" r="0.75" fill="#b0b2b8"/><circle cx="178" cy="44.90" r="0.75" fill="#b0b2b8"/><circle cx="1082" cy="42.3" r="4.1" fill="none" stroke="#c2c4ca" stroke-width="1.1"/><path d="M1081.7,39.699999999999996 V42.599999999999994 L1083.6,44.5" fill="none" stroke="#c2c4ca" stroke-width="0.9"/><text x="1088.90" y="45.00" font-size="8.0" fill="#c2c4ca" font-weight="400" text-anchor="start" textLength="33.30" lengthAdjust="spacingAndGlyphs" stroke="#c2c4ca" stroke-width="0.2" >Last hour</text><path d="M1127.8,40.2 L1131.55,44.4 L1135.3,40.2" fill="none" stroke="#c2c4ca" stroke-width="1.1"/><text x="51.00" y="259.50" font-size="8.7" fill="#e8e8e8" font-weight="400" text-anchor="start" textLength="181.70" lengthAdjust="spacingAndGlyphs" stroke="#e8e8e8" stroke-width="0.2" >Last hour (22-Aug-2024 10:52) - (22-Aug-2024 11:52)</text><text x="50.90" y="290.30" font-size="9.0" fill="#f2f2f2" font-weight="400" text-anchor="start" textLength="95.10" lengthAdjust="spacingAndGlyphs" stroke="#f2f2f2" stroke-width="0.38" >Successful Authentications</text><circle cx="159.8" cy="284.40" r="0.75" fill="#b0b2b8"/><circle cx="159.8" cy="286.90" r="0.75" fill="#b0b2b8"/><circle cx="159.8" cy="289.40" r="0.75" fill="#b0b2b8"/><circle cx="582.8" cy="287" r="4.1" fill="none" stroke="#c2c4ca" stroke-width="1.1"/><path d="M582.5,284.4 V287.3 L584.4,289.2" fill="none" stroke="#c2c4ca" stroke-width="0.9"/><text x="605.60" y="290.40" font-size="9.0" fill="#f2f2f2" font-weight="400" text-anchor="start" textLength="37.70" lengthAdjust="spacingAndGlyphs" stroke="#f2f2f2" stroke-width="0.38" >Failed SSO</text><circle cx="656.7" cy="284.40" r="0.75" fill="#b0b2b8"/><circle cx="656.7" cy="286.90" r="0.75" fill="#b0b2b8"/><circle cx="656.7" cy="289.40" r="0.75" fill="#b0b2b8"/><circle cx="1076.4" cy="287.2" r="4.1" fill="none" stroke="#c2c4ca" stroke-width="1.1"/><path d="M1076.1000000000001,284.59999999999997 V287.5 L1078.0,289.4" fill="none" stroke="#c2c4ca" stroke-width="0.9"/><text x="1083.70" y="290.30" font-size="8.0" fill="#c2c4ca" font-weight="400" text-anchor="start" textLength="39.10" lengthAdjust="spacingAndGlyphs" stroke="#c2c4ca" stroke-width="0.2" >Last 7 days</text><path d="M1127.8,285.2 L1131.55,289.4 L1135.3,285.2" fill="none" stroke="#c2c4ca" stroke-width="1.1"/><rect x="8" y="9.7" width="1.9" height="7.3" fill="#dcdcdc"/><path d="M10.6,13.4 H16 M13.6,11 L16.2,13.4 L13.6,15.8" fill="none" stroke="#dcdcdc" stroke-width="1.4"/><circle cx="12.9" cy="39.6" r="5.1" fill="#ededed"/><path d="M12.9,36.2 V41" stroke="#8a8d94" stroke-width="1.0"/><circle cx="12.9" cy="41.3" r="1.1" fill="#2a2d35"/><path d="M9.7,39.7 h0.9 M15.2,39.7 h0.9 M10.5,37.6 l0.5,0.5 M15.3,37.6 l-0.5,0.5" stroke="#7a7e88" stroke-width="0.6"/><path d="M12.8,62.2 V69.8 M9,66 H16.6" stroke="#33915a" stroke-width="1.2"/></svg></body></html>
